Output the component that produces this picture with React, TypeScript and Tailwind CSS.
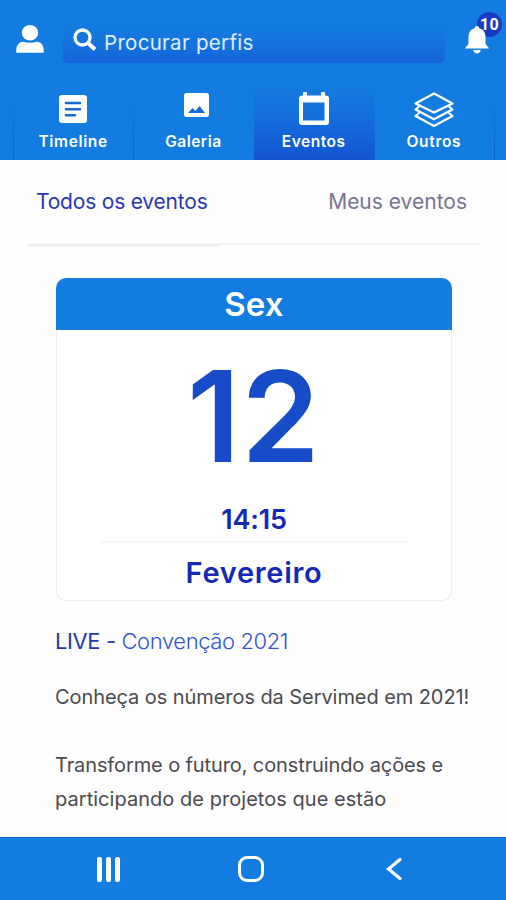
import React from "react";

type TabProps = { label: string; active?: boolean; spacing: string; children: React.ReactNode };

function Tab({ label, active, spacing, children }: TabProps) {
  return (
    <div className={`relative flex h-[76px] flex-1 flex-col items-center ${active ? "bg-linear-to-b from-[#137ce0] via-[#146bdb] to-[#1354cf]" : ""}`}>
      <div className="flex h-[49px] w-full items-center justify-center">{children}</div>
      <span className={`h-[18px] whitespace-nowrap text-[15.5px] leading-[18px] font-semibold ${spacing}`}>{label}</span>
      {!active && <i className="absolute bottom-0 left-0 h-16 w-px bg-linear-to-b from-transparent to-[#0d60d0]" />}
    </div>
  );
}

function Header() {
  return (
    <header className="flex h-40 flex-col bg-[#137ce0] text-white">
      <div className="flex h-[84px] pt-[25px]">
        <svg className="ml-4 h-[28px] w-[28px] shrink-0" viewBox="0 0 28 28" fill="#fff">
          <ellipse cx="14" cy="7.800" rx="8.200" ry="7.800" />
          <path d="M.3 27.700V25c0-5 3-8.300 7-8.300 4 1.500 9.400 1.500 13.400 0 4 0 7 3.300 7 8.300v2.700z" />
        </svg>
        <div className="ml-[19px] flex h-[38px] w-[382px] rounded-[5px] bg-linear-to-b from-[#137ce0] via-[#1473dd] to-[#1464d9] pl-[10px]">
          <svg className="mt-[3px] h-[24px] w-[24px]" viewBox="0 0 24 24" fill="none" stroke="#fff">
            <circle cx="9.500" cy="9.500" r="7.500" strokeWidth="3.300" />
            <path d="M15 15l7 6.500" strokeWidth="4" />
          </svg>
          <span className="ml-[7px] h-9 whitespace-nowrap text-[20.5px] leading-9 tracking-[0.3px] text-[#e0edff]">Procurar perfis</span>
        </div>
        <div className="relative ml-5 h-[32px] w-[26px]">
          <span className="absolute left-[12px] -top-[13px] flex h-[25px] w-[25px] items-center justify-center rounded-full bg-[#183bc5] font-['Roboto'] text-[16px] leading-none font-bold tracking-[0.3px]">10</span>
          <svg className="absolute top-[1px] left-0 h-[28px] w-[24px]" viewBox="0 0 24 28" fill="#fff">
            <path d="M12 0c1.300 0 2.200.9 2.200 2.200 4.500 1 6.300 4.500 6.300 9.300v5.500c0 2 2.700 3.300 3.500 5.500H0c.8-2.200 3.500-3.500 3.500-5.500v-5.500c0-4.800 1.800-8.300 6.300-9.300C9.800.9 10.700 0 12 0zM8.300 24h7.400c-.3 2.300-1.700 3.500-3.700 3.500S8.600 26.300 8.300 24z" />
          </svg>
        </div>
      </div>
      <nav className="flex pr-3 pl-[13px]">
        <Tab label="Timeline" spacing="tracking-[0.65px]">
          <svg className="h-[28px] w-[28px]" viewBox="0 0 28 28">
            <rect width="28" height="28" rx="3" fill="#fff" />
            <path d="M7 8h14M7 14.300h14M7 20.300h9" stroke="#1769d4" strokeWidth="2.600" strokeLinecap="round" />
          </svg>
        </Tab>
        <Tab label="Galeria" spacing="tracking-[0.5px]">
          <svg className="mb-[7px] ml-1.5 h-[24px] w-[25px]" viewBox="0 0 25 24">
            <rect width="25" height="24" rx="2.500" fill="#fff" />
            <path d="M4 20l4.500-5 3 3 4-5L21 20z" fill="#1769d4" />
          </svg>
        </Tab>
        <Tab label="Eventos" active spacing="tracking-[0.5px]">
          <svg className="h-[33px] w-[30px]" viewBox="0 0 30 33" fill="#fff">
            <path fillRule="evenodd" d="M4 1q0-1 1-1h2q1 0 1 1v2.500h14V1q0-1 1-1h2q1 0 1 1v2.500h1q3 0 3 3V30q0 3-3 3H3q-3 0-3-3V6.500q0-3 3-3h1zM4 10.500v18h21.500v-18z" />
          </svg>
        </Tab>
        <Tab label="Outros" spacing="tracking-[0.7px]">
          <svg className="mt-0.5 h-[36px] w-[40px]" viewBox="0 0 40 36" fill="none" stroke="#fff" strokeWidth="2.200" strokeLinejoin="round" strokeLinecap="round">
            <path d="M20 1.500L38.500 11.500 20 20.500 1.500 11.500z" />
            <path d="M4.500 15L1.500 17.500 20 27.300l18.500-9.800L35.500 15M4.500 21.500L1.500 24 20 34l18.500-10-3-2.500" />
          </svg>
        </Tab>
        <i className="mt-3 -mr-px h-16 w-px bg-linear-to-b from-transparent to-[#0d60d0]" />
      </nav>
    </header>
  );
}

function EventCard() {
  return (
    <section className="mt-[31px] ml-14 h-[323px] w-[396px] shrink-0 text-center text-[#1529b5]">
      <h2 className="h-[52px] rounded-t-[10px] bg-[#137ce0] text-[33px] leading-[52px] font-semibold tracking-[0.2px] text-white">Sex</h2>
      <div className="flex h-[271px] flex-col items-center rounded-b-[10px] border border-t-0 border-[#ededf2] bg-white">
        <div className="mt-[16px] h-[140px] text-[126px] leading-[140px] font-semibold tracking-[1px] text-[#174cc9]">12</div>
        <time className="mt-[18px] h-[32px] text-[27px] leading-[32px] font-semibold tracking-[-0.2px]">14:15</time>
        <hr className="mt-[5px] w-[306px] border-t-2 border-[#f6f6f7]" />
        <div className="mt-[13px] h-[34px] text-[29px] leading-[34px] font-semibold tracking-[0.7px]">Fevereiro</div>
      </div>
    </section>
  );
}

export default function App() {
  return (
    <div className="flex h-[900px] w-[506px] flex-col overflow-hidden bg-[#fefefe] font-['Inter',sans-serif]">
      <Header />
      <div className="mx-7 flex h-[83px] justify-between pr-[11px] pl-[8px] text-[21px] leading-[83px] whitespace-nowrap">
        <span className="text-[#2936b5] tracking-[-0.2px]">Todos os eventos</span>
        <span className="text-[#77748f] tracking-[0px]">Meus eventos</span>
      </div>
      <div className="mr-[26px] ml-7 h-1 border-t-2 border-[#f5f5f8]">
        <div className="-mt-px h-[3px] w-[191px] bg-[#f1f0f5]" />
      </div>
      <EventCard />
      <article className="ml-[55px] whitespace-nowrap text-[20px] text-[#4a4a4f]">
        <h3 className="mt-[25px] h-[30px] text-[22px] leading-[30px] font-light tracking-[-0.4px] text-[#3254d5]"><span className="font-normal text-[#2638a9]">LIVE -</span> Convenção 2021</h3>
        <p className="mt-[24px] h-[34px] leading-[34px] tracking-[-0.07px]">Conheça os números da Servimed em 2021!</p>
        <p className="mt-[34px] h-[34px] leading-[34px] tracking-[-0.11px]">Transforme o futuro, construindo ações e</p>
        <p className="h-[34px] leading-[34px] tracking-[0.04px]">participando de projetos que estão</p>
      </article>
      <footer className="mt-auto flex h-[63px] shrink-0 items-center border-t border-[#1169cc] bg-[#137ce0]">
        <div className="ml-[97px] flex gap-[4px]">
          <i className="h-[25px] w-[5px] rounded-[2px] bg-white" />
          <i className="h-[25px] w-[5px] rounded-[2px] bg-white" />
          <i className="h-[25px] w-[5px] rounded-[2px] bg-white" />
        </div>
        <div className="ml-[118px] h-[26px] w-[26px] rounded-[9px] border-[3px] border-white" />
        <svg className="ml-[122px] h-[24px] w-[16px]" viewBox="0 0 16 24" fill="none" stroke="#fff" strokeWidth="3.200" strokeLinecap="round">
          <path d="M14 2.500L2.500 12 14 21.500" />
        </svg>
      </footer>
    </div>
  );
}
